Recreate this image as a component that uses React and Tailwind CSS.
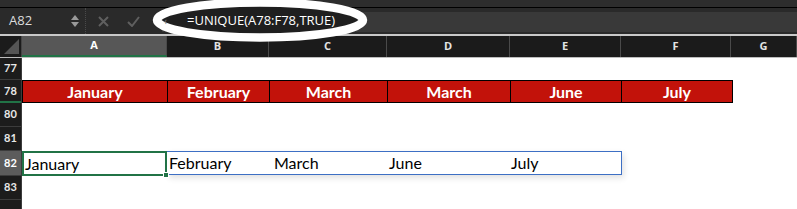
import React from 'react';

const cols = [
    { id: 'A', w: 'w-[145px]' },
    { id: 'B', w: 'w-[102px]' },
    { id: 'C', w: 'w-[118px]' },
    { id: 'D', w: 'w-[123px]' },
    { id: 'E', w: 'w-[111px]' },
    { id: 'F', w: 'w-[110px]' },
    { id: 'G', w: 'w-[66px]' },
];

const months = ['January', 'February', 'March', 'March', 'June', 'July'];

const font = { fontFamily: 'Lato, "Open Sans", sans-serif' };

const RowNum = ({ n, h, selected, mark }) => (
    <div className={`relative w-[22px] shrink-0 ${h} border-b border-r border-[#3c3c3c] flex items-center justify-center text-[11px] font-bold ${selected ? 'bg-[#5c5c5c] text-white' : 'bg-[#1c1c1c] text-[#e8e8e8]'}`}>
        {n}
        {mark && <div className="absolute left-0 right-0 -bottom-px h-[2px] bg-[#217346]" />}
    </div>
);

export default function App() {
    return (
        <div className="relative w-[797px] h-[209px] overflow-hidden bg-white" style={font}>
            {/* top strip */}
            <div className="h-[8px] bg-[#2d2d2d] border-b border-black" />

            {/* formula bar */}
            <div className="h-[28px] bg-[#2a2a2a] border-b-2 border-[#c9c9c9] flex items-center">
                <div className="w-[86px] h-full flex items-center pl-[9px] pr-[6px] border-r border-dotted border-[#4a4a4a]">
                    <span className="text-[13px] text-[#dcdcdc]" style={{ fontFamily: '"Open Sans", sans-serif' }}>A82</span>
                    <div className="ml-auto flex flex-col items-center gap-[2px]">
                        <div className="w-0 h-0 border-l-[4px] border-r-[4px] border-b-[5px] border-l-transparent border-r-transparent border-b-[#9a9a9a]" />
                        <div className="w-0 h-0 border-l-[4px] border-r-[4px] border-t-[5px] border-l-transparent border-r-transparent border-t-[#9a9a9a]" />
                    </div>
                </div>
                <div className="w-[76px] flex items-center pl-[12px] gap-[18px]">
                    <svg width="11" height="11" viewBox="0 0 11 11"><path d="M1 1L10 10M10 1L1 10" stroke="#5f5f5f" strokeWidth="2" /></svg>
                    <svg width="13" height="11" viewBox="0 0 13 11"><path d="M1 6L5 10L12 1" stroke="#5f5f5f" strokeWidth="2" fill="none" /></svg>
                </div>
                <div className="flex-1 h-[20px] mt-[1px] bg-[#393939]" />
            </div>

            {/* column headers */}
            <div className="h-[22px] flex border-b border-[#bdbdbd] bg-[#1b1b1b]">
                <div className="relative w-[22px] shrink-0 border-r border-[#444] overflow-hidden">
                    <div className="absolute right-[2px] bottom-[3px] w-0 h-0" style={{ borderRight: '15px solid #555', borderTop: '15px solid transparent' }} />
                </div>
                {cols.map(c => (
                    <div key={c.id} className={`${c.w} shrink-0 flex items-center justify-center text-[11px] font-bold border-r border-[#4a4a4a] ${c.id === 'A' ? 'bg-[#575757] text-white border-b-2 border-b-[#217346]' : 'text-[#e4e4e4]'}`} style={{ fontFamily: '"Open Sans", sans-serif' }}>
                        {c.id}
                    </div>
                ))}
            </div>

            {/* row 77 */}
            <div className="flex">
                <RowNum n="77" h="h-[22px]" />
            </div>

            {/* row 78 */}
            <div className="flex">
                <RowNum n="78" h="h-[23px]" mark />
                <div className="flex border border-black bg-[#c2120a]">
                    {months.map((m, i) => (
                        <div key={i} className={`${cols[i].w} ${i === 0 ? 'w-[144px]' : ''} shrink-0 h-[21px] flex items-center justify-center text-white font-bold text-[16px] ${i < 5 ? 'border-r border-black' : ''}`}>
                            {m}
                        </div>
                    ))}
                </div>
            </div>

            <div className="flex">
                <RowNum n="80" h="h-[24px]" />
            </div>
            <div className="flex">
                <RowNum n="81" h="h-[24px]" />
            </div>

            {/* row 82 */}
            <div className="flex">
                <RowNum n="82" h="h-[25px]" selected />
                <div className="relative w-[145px] h-[25px] border-2 border-[#217346] flex items-center pl-[1px] text-[16px] text-black">
                    January
                    <div className="absolute -right-[4px] -bottom-[4px] w-[6px] h-[6px] bg-[#217346] border border-white" />
                </div>
                <div className="w-[455px] h-[24px] border border-[#3d6fc4] border-l-0 flex items-center text-[16px] text-black shadow-[2px_3px_6px_rgba(0,0,0,0.12)]">
                    <span className="w-[103px] pl-[2px]">February</span>
                    <span className="w-[116px] pl-[4px]">March</span>
                    <span className="w-[123px] pl-[3px]">June</span>
                    <span className="pl-[2px]">July</span>
                </div>
            </div>

            <div className="flex">
                <RowNum n="83" h="h-[24px]" />
            </div>
            <div className="flex">
                <RowNum n="" h="h-[24px]" />
            </div>

            {/* annotation ellipse */}
            <svg className="absolute left-[150px] top-[-2px]" width="222" height="46" viewBox="0 0 222 46">
                <ellipse cx="110" cy="22" rx="103" ry="17.5" fill="#1f1f1f" stroke="white" strokeWidth="8.5" />
            </svg>
            <span className="absolute left-[164px] top-[13px] text-[11px] text-[#777]">‹</span>
            <span className="absolute left-[187px] top-[11px] text-[13px] text-white" style={{ fontFamily: '"Open Sans", sans-serif' }}>=UNIQUE(A78:F78,TRUE)</span>
        </div>
    );
}
